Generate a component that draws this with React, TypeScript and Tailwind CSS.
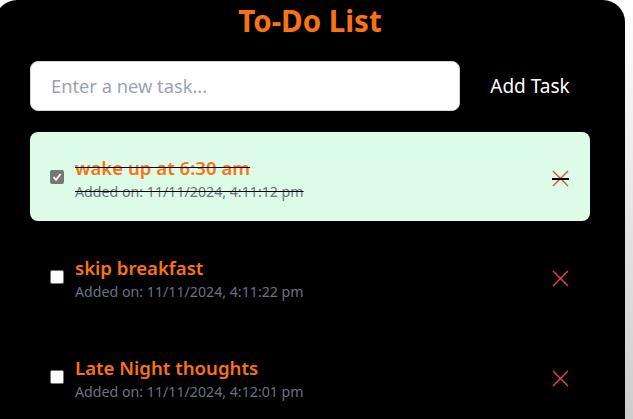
import React from "react";

const tasks = [
  { title: "wake up at 6:30 am", date: "Added on: 11/11/2024, 4:11:12 pm", done: true },
  { title: "skip breakfast", date: "Added on: 11/11/2024, 4:11:22 pm", done: false },
  { title: "Late Night thoughts", date: "Added on: 11/11/2024, 4:12:01 pm", done: false },
];

function XIcon() {
  return (
    <svg width="17" height="17" viewBox="0 0 17 17" fill="none">
      <path d="M1 1L16 16M16 1L1 16" stroke="#ef4444" strokeWidth="1.4" />
    </svg>
  );
}

function Check({ checked }: { checked: boolean }) {
  if (checked) {
    return (
      <div className="flex h-[14px] w-[14px] items-center justify-center rounded-[2px] bg-[#767676]">
        <svg width="10" height="10" viewBox="0 0 10 10" fill="none">
          <path d="M1.5 5.2L4 7.8L8.6 2" stroke="white" strokeWidth="1.8" />
        </svg>
      </div>
    );
  }
  return <div className="h-[14px] w-[14px] rounded-[2px] border border-[#767676] bg-white" />;
}

export default function App() {
  return (
    <div
      className="h-[419px] w-full overflow-hidden bg-gradient-to-b from-white to-[#cdcdcd]"
      style={{ fontFamily: '"Noto Sans", "Open Sans", sans-serif' }}
    >
      <div className="-ml-[5px] h-[440px] w-[630px] rounded-[22px] bg-black px-[35px]">
        <h1 className="pt-[2px] text-center text-[29.5px] font-bold leading-[38px] text-[#f97316]">To-Do List</h1>
        <div className="mt-[21px] flex gap-[10px]">
          <div className="flex h-[50px] w-[430px] items-center rounded-lg border border-[#d1d5db] bg-white pl-[20px]">
            <span className="text-[18.3px] text-[#9ca3af]">Enter a new task...</span>
          </div>
          <button className="flex h-[50px] flex-1 items-center justify-center text-[19px] text-white">Add Task</button>
        </div>
        <div className="mt-[21px] flex flex-col gap-[11px]">
          {tasks.map((t, i) => (
            <div
              key={i}
              className={`flex h-[89px] items-center rounded-lg pl-[20px] pr-[21px] ${t.done ? "bg-[#dcfce7] line-through" : ""}`}
            >
              <div>
                <Check checked={t.done} />
              </div>
              <div className="ml-[11px] flex flex-1 flex-col pt-[3px]">
                <span className="text-[18.6px] font-semibold leading-[27px] text-[#f97316]">{t.title}</span>
                <span className="text-[14.2px] leading-[22px] text-[#6b7280]">{t.date}</span>
              </div>
              <div className="relative mt-[3px]">
                <XIcon />
                {t.done && <div className="absolute left-0 right-0 top-[8px] h-[2px] bg-black" />}
              </div>
            </div>
          ))}
        </div>
      </div>
    </div>
  );
}
